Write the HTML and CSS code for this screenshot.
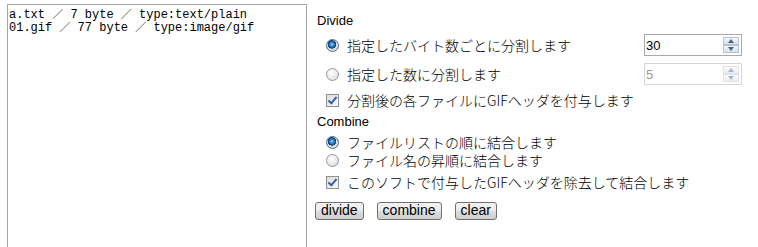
FILE: index.html
```html
<!DOCTYPE html>
<html lang="ja">
<head>
  <meta charset="UTF-8" />
  <title>GIF Divide / Combine</title>
  <link rel="stylesheet" href="styles.css">
</head>
<body>
  <div class="app">
    <div class="filelist">
      <div class="file">a.txt <span class="sep">／</span> 7 byte <span class="sep">／</span> type:text/plain</div>
      <div class="file">01.gif <span class="sep">／</span> 77 byte <span class="sep">／</span> type:image/gif</div>
    </div>

    <div class="panel">
      <div class="caption">Divide</div>

      <div class="row row-input">
        <label class="opt"><input type="radio" name="divide" checked> 指定したバイト数ごとに分割します</label>
        <span class="spin">
          <input type="text" value="30">
          <span class="arrows"><i class="up"></i><i class="down"></i></span>
        </span>
      </div>

      <div class="row row-input">
        <label class="opt"><input type="radio" name="divide"> 指定した数に分割します</label>
        <span class="spin disabled">
          <input type="text" value="5" disabled>
          <span class="arrows"><i class="up"></i><i class="down"></i></span>
        </span>
      </div>

      <div class="row row-check">
        <label class="opt"><input type="checkbox" checked> 分割後の各ファイルにGIFヘッダを付与します</label>
      </div>

      <div class="caption caption-combine">Combine</div>

      <div class="row row-first">
        <label class="opt"><input type="radio" name="combine" checked> ファイルリストの順に結合します</label>
      </div>
      <div class="row row-second">
        <label class="opt"><input type="radio" name="combine"> ファイル名の昇順に結合します</label>
      </div>
      <div class="row row-last">
        <label class="opt"><input type="checkbox" checked> このソフトで付与したGIFヘッダを除去して結合します</label>
      </div>

      <div class="buttons">
        <button>divide</button>
        <button>combine</button>
        <button>clear</button>
      </div>
    </div>
  </div>
</body>
</html>
```

FILE: styles.css
```css
body {
  margin: 0;
  background: #fff;
  color: #000;
  font-family: "Noto Sans CJK JP", "Liberation Sans", sans-serif;
}

.app {
  display: flex;
  padding: 4px 0 0 7px;
  height: 243px;
  overflow: hidden;
}

.filelist {
  width: 300px;
  height: 270px;
  flex: none;
  box-sizing: border-box;
  padding: 2px 1px;
  border: 1px solid #a5a5a5;
  font-family: "Liberation Mono", monospace;
  font-size: 12px;
  line-height: 13px;
  color: #000;
}

.filelist .file {
  white-space: pre;
  height: 13px;
}

.filelist .sep {
  font-family: "Noto Sans CJK JP", sans-serif;
  font-size: 11px;
}

.panel {
  margin-left: 10px;
  padding-top: 10px;
  width: 434px;
}

.caption {
  font-family: "Liberation Sans", sans-serif;
  font-size: 13px;
  line-height: 14px;
  height: 14px;
}

.caption-combine {
  margin-top: 6px;
}

.row {
  display: flex;
  align-items: center;
  justify-content: space-between;
  height: 18px;
  line-height: 17px;
  padding-left: 9px;
  font-size: 14px;
  font-weight: 300;
}

.row-input {
  height: 24px;
  margin-top: 5px;
}

.row-check {
  margin-top: 5px;
}

.row-first {
  margin-top: 4px;
}

.row-second {
  margin-top: 1px;
  height: 17px;
}

.row-last {
  margin-top: 4px;
}

.opt {
  display: flex;
  align-items: center;
  gap: 6px;
  white-space: nowrap;
}

/* old-style radio and checkbox */
.opt input {
  appearance: none;
  margin: 0 2px 0 0;
  width: 13px;
  height: 13px;
  flex: none;
  box-sizing: border-box;
}

.opt input[type="radio"] {
  border-radius: 50%;
  border: 1px solid #8f9aa3;
  background: radial-gradient(circle at 40% 35%, #ffffff 0, #e6e6e6 60%, #cfd2d4 100%);
}

.opt input[type="radio"]:checked {
  border-color: #4f6b86;
  background:
    radial-gradient(circle at 45% 40%, #9fd3f7 0, #2e86c8 2px, #0c3c6c 4px, transparent 4.5px),
    radial-gradient(circle, #e7eef4 0, #c9d4de 100%);
}

.opt input[type="checkbox"] {
  border: 1px solid #8e8f8f;
  background: linear-gradient(135deg, #dcdcdc, #fbfbfb);
  position: relative;
}

.opt input[type="checkbox"]:checked::after {
  content: "";
  position: absolute;
  left: 3px;
  top: 0px;
  width: 3px;
  height: 7px;
  border: solid #3a5fb0;
  border-width: 0 2px 2px 0;
  transform: rotate(40deg);
}

.spin {
  display: flex;
  align-items: stretch;
  width: 98px;
  height: 22px;
  box-sizing: border-box;
  border: 1px solid #a9a9a9;
  background: #fff;
  margin-right: 9px;
}

.spin input {
  border: none;
  outline: none;
  width: 70px;
  padding: 0 0 0 1px;
  font-family: "Liberation Sans", sans-serif;
  font-size: 13px;
  color: #000;
  background: transparent;
}

.arrows {
  display: flex;
  flex-direction: column;
  justify-content: center;
  margin: 2px 2px 2px auto;
  width: 16px;
}

.arrows i {
  display: block;
  height: 8px;
  position: relative;
  border: 1px solid #b7c3d0;
  background: linear-gradient(#f4f7fb, #d7e0ea);
}

.arrows i::after {
  content: "";
  position: absolute;
  left: 4px;
  top: 1px;
  border-left: 3px solid transparent;
  border-right: 3px solid transparent;
}

.arrows .up::after {
  border-bottom: 4px solid #4d6185;
}

.arrows .down::after {
  border-top: 4px solid #4d6185;
}

.spin.disabled {
  border-color: #d5d5d5;
}

.spin.disabled input {
  color: #9a9a9a;
}

.spin.disabled .arrows i {
  border-color: #dde3e9;
  background: linear-gradient(#fafbfc, #e9eef3);
}

.spin.disabled .arrows .up::after {
  border-bottom-color: #a6b2c6;
}

.spin.disabled .arrows .down::after {
  border-top-color: #a6b2c6;
}

.buttons {
  display: flex;
  gap: 13px;
  margin-top: 11px;
  margin-left: -2px;
}

button {
  font-family: "Liberation Sans", sans-serif;
  font-size: 14px;
  line-height: 13px;
  padding: 1px 5px 2px;
  border: 1px solid #707070;
  border-radius: 3px;
  background: linear-gradient(#f2f2f2 0, #ebebeb 50%, #dddddd 51%, #cfcfcf 100%);
  color: #000;
}
```
